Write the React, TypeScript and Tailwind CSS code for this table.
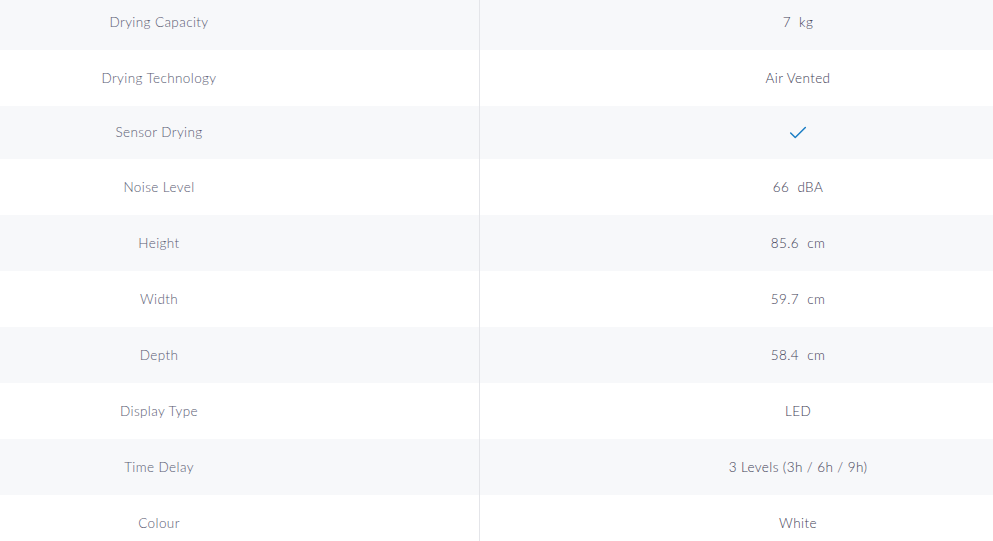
import { Check } from "lucide-react";

type Spec = { label: string; value?: string; check?: boolean };

const SPECS: Spec[] = [
  { label: "Drying Capacity", value: "7\u00a0 kg" },
  { label: "Drying Technology", value: "Air Vented" },
  { label: "Sensor Drying", check: true },
  { label: "Noise Level", value: "66\u00a0 dBA" },
  { label: "Height", value: "85.6\u00a0 cm" },
  { label: "Width", value: "59.7\u00a0 cm" },
  { label: "Depth", value: "58.4\u00a0 cm" },
  { label: "Display Type", value: "LED" },
  { label: "Time Delay", value: "3 Levels (3h / 6h / 9h)" },
  { label: "Colour", value: "White" },
];

function SpecRow({ spec, index }: { spec: Spec; index: number }) {
  const striped = index % 2 === 0;
  return (
    <div className={`grid grid-cols-[480px_1fr] ${spec.check ? "h-[53px]" : "h-[56px]"} ${striped ? "bg-[#f7f8fa]" : "bg-white"}`}>
      <div className="flex items-center justify-center pr-[161px] border-r border-[#e4e5e9] text-[#595b72]">
        {spec.label}
      </div>
      <div className="flex items-center justify-center pl-[123px] text-[#3f4156]">
        {spec.check ? <Check size={22} strokeWidth={1.6} className="text-[#1a7dc4]" /> : spec.value}
      </div>
    </div>
  );
}

export default function App() {
  return (
    <div className="w-[993px] h-[541px] overflow-hidden bg-white">
      <div className="-mt-[6px] text-[13.5px] font-light tracking-[0.4px]" style={{ fontFamily: "Lato, 'Noto Sans', sans-serif" }}>
        {SPECS.map((spec, i) => (
          <SpecRow key={spec.label} spec={spec} index={i} />
        ))}
      </div>
    </div>
  );
}
